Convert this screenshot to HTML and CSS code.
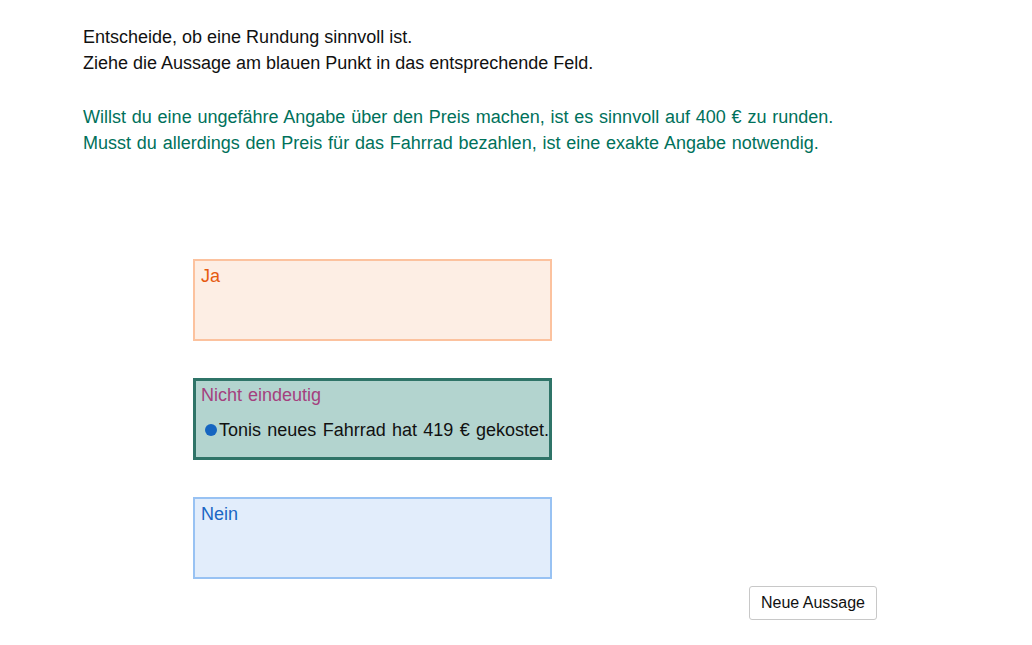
FILE: index.html
```html
<!DOCTYPE html>
<html>
<head>
<meta name="viewport" content="width=device-width, initial-scale=1">
<title>Rundung</title>
<link rel="stylesheet" href="styles.css">
</head>
<body>
<div class="sheet">
<div class="task">
    <div>Entscheide, ob eine Rundung sinnvoll ist.</div>
    <div>Ziehe die Aussage am blauen Punkt in das entsprechende Feld.</div>
</div>
<div class="hint">
    <div>Willst du eine ungefähre Angabe über den Preis machen, ist es sinnvoll auf 400 € zu runden.</div>
    <div>Musst du allerdings den Preis für das Fahrrad bezahlen, ist eine exakte Angabe notwendig.</div>
</div>
<div class="fields">
    <div class="field field-ja">
        <div class="field-label">Ja</div>
    </div>
    <div class="field field-unclear">
        <div class="field-label">Nicht eindeutig</div>
        <div class="statement"><span class="dot"></span>Tonis neues Fahrrad hat 419 € gekostet.</div>
    </div>
    <div class="field field-nein">
        <div class="field-label">Nein</div>
    </div>
</div>
<div class="actions">
    <button class="btn" type="button">Neue Aussage</button>
</div>
</div>
</body>
</html>
```
FILE: styles.css
```css
body {
	margin: 0;
	background: #fff;
	font-family: "Liberation Sans", Arial, sans-serif;
	color: #111;
}
.sheet {
	width: 1032px;
	height: 645px;
	overflow: hidden;
}
.task {
	padding: 24px 0 0 83px;
	font-size: 18px;
	line-height: 26px;
}
.hint {
	margin-top: 28px;
	padding-left: 83px;
	font-size: 18px;
	line-height: 26px;
	word-spacing: 0.8px;
	color: #00715b;
}
.fields {
	margin: 103px 0 0 193px;
	display: flex;
	flex-direction: column;
	gap: 37px;
}
.field {
	box-sizing: border-box;
	width: 359px;
	height: 82px;
	padding: 4px 0 0 6px;
	border: 2px solid;
	font-size: 18px;
}
.field-ja {
	background: #fdeee4;
	border-color: #fcc29e;
	color: #e65a0f;
}
.field-unclear {
	background: #b3d4cf;
	border: 3px solid #2f7468;
	padding-left: 5px;
	padding-top: 3px;
	color: #a4407e;
}
.field-nein {
	background: #e2edfb;
	border-color: #98c2f3;
	color: #1a66c4;
}
.field-label {
	line-height: 22px;
	word-spacing: 1px;
}
.statement {
	display: flex;
	align-items: center;
	margin-top: 13px;
	color: #111;
	line-height: 22px;
	word-spacing: 1.3px;
	white-space: nowrap;
}
.dot {
	width: 12px;
	height: 12px;
	margin: 0 2px 0 4px;
	border-radius: 50%;
	background: #1565c0;
}
.actions {
	width: 877px;
	margin-top: 7px;
	display: flex;
	justify-content: flex-end;
}
.btn {
	height: 34px;
	padding: 0 11px;
	background: #fff;
	border: 1px solid #c8c8c8;
	border-radius: 3px;
	font-family: inherit;
	font-size: 16px;
	color: #111;
}
```
